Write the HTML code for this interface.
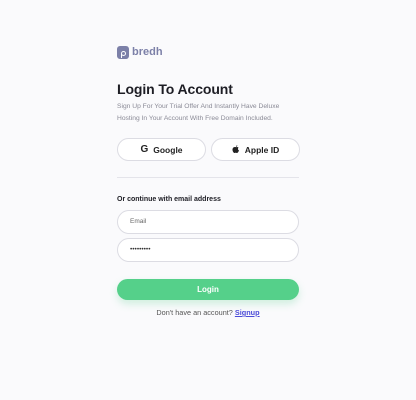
<!DOCTYPE html>
<html><head><style>
*{margin:0;padding:0;box-sizing:border-box}
body{width:416px;height:400px;background:#fafafc;font-family:"Liberation Sans",sans-serif;position:relative;overflow:hidden;color:#1d1d24}
.a{position:absolute}
.btn{position:absolute;height:23px;border:1px solid #dcdce3;border-radius:12px;background:#fff;display:flex;align-items:center;justify-content:center;font-size:8.5px;font-weight:bold;color:#222}
.inp{position:absolute;left:117px;width:182px;height:24px;border:1px solid #dcdce3;border-radius:12px;background:#fff;font-size:6.5px;color:#666;padding-left:12px;line-height:22px}
</style></head><body>
<div class="a" style="left:117px;top:46px;width:12px;height:13px;background:#7c80a8;border-radius:3px"></div>
<div class="a" style="left:121px;top:51px;width:5px;height:5px;border:1.3px solid #fff;border-radius:50%"></div>
<div class="a" style="left:120.5px;top:54px;width:1.5px;height:4px;background:#fff"></div>
<div class="a" style="left:132px;top:46px;font-size:11px;font-weight:bold;color:#7c80a8">bredh</div>
<div class="a" style="left:117px;top:81px;font-size:14px;font-weight:bold;color:#1d1d24;letter-spacing:-0.1px">Login To Account</div>
<div class="a" style="left:117px;top:101px;font-size:6.7px;line-height:12px;color:#8a8a96">Sign Up For Your Trial Offer And Instantly Have Deluxe<br>Hosting In Your Account With Free Domain Included.</div>
<div class="btn" style="left:117px;top:138px;width:89px"><span style="font-size:10px;margin-right:5px">G</span>Google</div>
<div class="btn" style="left:211px;top:138px;width:89px"><svg width="8" height="9" viewBox="0 0 8 9" style="margin-right:5px"><path d="M4 2.2C4.8 1.8 6 1.8 6.6 2.8 5.6 3.4 5.8 5 7 5.4 6.6 6.6 5.8 8 5 8 4.5 8 4.3 7.7 3.8 7.7 3.2 7.7 3 8 2.5 8 1.5 8 .3 6 .5 4.3.7 2.3 2.6 1.7 4 2.2ZM4 1.8C4 1 4.6.3 5.3.2 5.4 1 4.7 1.8 4 1.8Z" fill="#222"/></svg>Apple ID</div>
<div class="a" style="left:117px;top:177px;width:182px;height:1px;background:#e4e4ea"></div>
<div class="a" style="left:117px;top:196px;font-size:7px;font-weight:bold;color:#1d1d24">Or continue with email address</div>
<div class="inp" style="top:210px">Email</div>
<div class="inp" style="top:238px;color:#333">•••••••••</div>
<div class="a" style="left:117px;top:279px;width:182px;height:21px;background:#55d08a;border-radius:11px;box-shadow:0 4px 8px rgba(85,208,138,.25);color:#fff;font-size:8px;font-weight:bold;text-align:center;line-height:21px">Login</div>
<div class="a" style="left:0;width:416px;top:308px;text-align:center;font-size:7.3px;color:#555">Don't have an account? <span style="color:#4b4bd8;text-decoration:underline;font-weight:bold">Signup</span></div>
</body></html>
